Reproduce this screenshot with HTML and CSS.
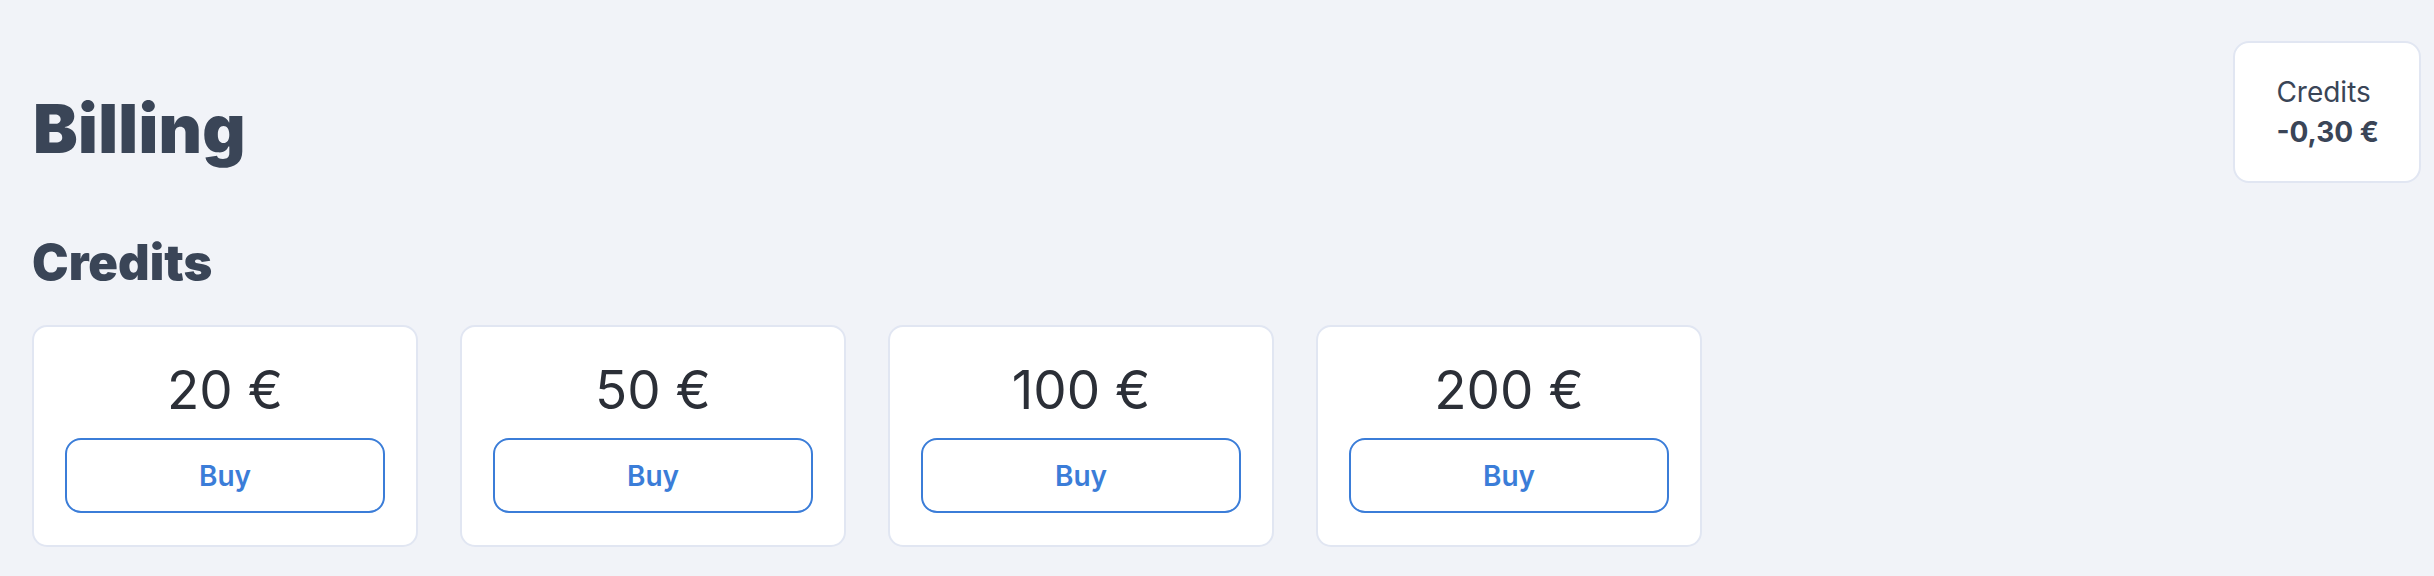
FILE: index.html
```html
<!DOCTYPE html>
<html lang="en">
<head>
<meta charset="utf-8">
<title>Billing</title>
<link rel="stylesheet" href="styles.css">
</head>
<body>
<div class="page">
  <header class="header">
    <h1 class="title">Billing</h1>
    <div class="balance">
      <div class="balance-label">Credits</div>
      <div class="balance-value">-0,30 €</div>
    </div>
  </header>
  <h2 class="section-title">Credits</h2>
  <div class="packs">
    <div class="pack">
      <div class="pack-amount">20 €</div>
      <button class="buy">Buy</button>
    </div>
    <div class="pack">
      <div class="pack-amount">50 €</div>
      <button class="buy">Buy</button>
    </div>
    <div class="pack">
      <div class="pack-amount">100 €</div>
      <button class="buy">Buy</button>
    </div>
    <div class="pack">
      <div class="pack-amount">200 €</div>
      <button class="buy">Buy</button>
    </div>
  </div>
</div>
</body>
</html>
```
FILE: styles.css
```css
* { box-sizing: border-box; }
html, body {
  margin: 0;
  padding: 0;
  background: #f1f3f8;
  font-family: Inter, "Liberation Sans", sans-serif;
}
.page {
  padding: 41px 13px 0 32px;
}
.header {
  display: flex;
  justify-content: space-between;
  align-items: flex-start;
}
.title {
  margin: 47px 0 0 1px;
  font-size: 67px;
  line-height: 81px;
  font-weight: 900;
  color: #3a4557;
  letter-spacing: 0.3px;
}
.balance {
  background: #ffffff;
  border: 2px solid #e1e6f2;
  border-radius: 16px;
  padding: 29px 40px 29px 41px;
  color: #3a4557;
  font-size: 28px;
  line-height: 40px;
}
.balance-value {
  font-weight: 700;
}
.section-title {
  margin: 50px 0 0 0;
  font-size: 49px;
  line-height: 59px;
  font-weight: 900;
  color: #3a4557;
  letter-spacing: 0;
}
.packs {
  display: flex;
  gap: 42px;
  margin-top: 33px;
}
.pack {
  width: 386px;
  background: #ffffff;
  border: 2px solid #e1e6f2;
  border-radius: 15px;
  padding: 31px 31px 32px;
  display: flex;
  flex-direction: column;
  align-items: stretch;
}
.pack-amount {
  text-align: center;
  font-size: 53px;
  line-height: 65px;
  color: #2b2f37;
  font-weight: 400;
}
.buy {
  margin-top: 15px;
  height: 75px;
  background: #ffffff;
  border: 2px solid #3b7dd8;
  border-radius: 16px;
  color: #3b7dd8;
  font-family: Inter, "Liberation Sans", sans-serif;
  font-size: 28px;
  font-weight: 600;
  cursor: pointer;
}
```
